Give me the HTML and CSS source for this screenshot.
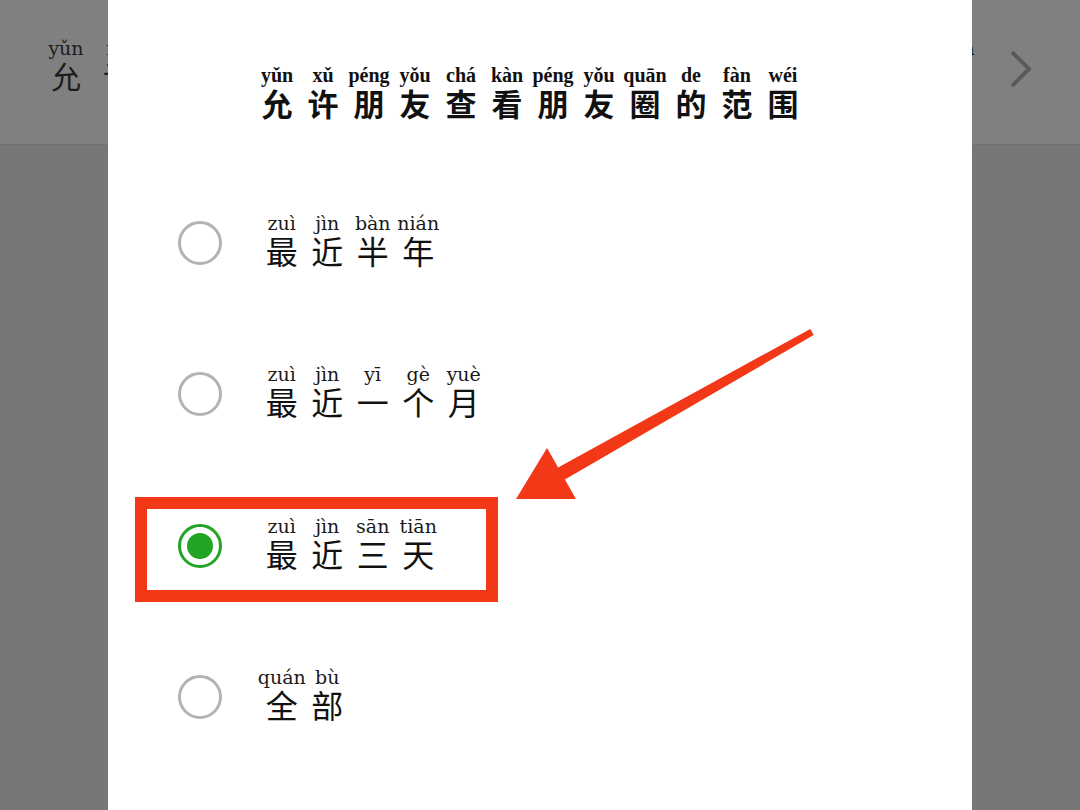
FILE: index.html
```html
<!DOCTYPE html>
<html lang="zh-CN">
<head>
<meta charset="utf-8">
<title>允许朋友查看朋友圈的范围</title>
<link rel="stylesheet" href="styles.css">
</head>
<body>
<div class="screen">
  <header class="topbar">
    <div class="word bg-word">
      <div class="col bcol"><span class="py">yǔn</span><span class="hz">允</span></div>
      <div class="col bcol"><span class="py">xǔ</span><span class="hz">许</span></div>
      <div class="col bcol"><span class="py">péng</span><span class="hz">朋</span></div>
      <div class="col bcol"><span class="py">yǒu</span><span class="hz">友</span></div>
    </div>
    <div class="right">
      <div class="word bg-word">
        <div class="col bcol"><span class="py">zuì</span><span class="hz">最</span></div>
        <div class="col bcol"><span class="py">jìn</span><span class="hz">近</span></div>
        <div class="col bcol"><span class="py">sān</span><span class="hz">三</span></div>
        <div class="col bcol"><span class="py">tiān</span><span class="hz">天</span></div>
      </div>
      <svg class="chev" width="24" height="38" viewBox="0 0 24 38"><path d="M4 2 L21 19 L4 36" fill="none" stroke="#5a5a5a" stroke-width="4"/></svg>
    </div>
  </header>
  <div class="rest"></div>

  <div class="dialog">
    <div class="title">
      <div class="word">
        <div class="col tcol"><span class="py">yǔn</span><span class="hz">允</span></div>
        <div class="col tcol"><span class="py">xǔ</span><span class="hz">许</span></div>
        <div class="col tcol"><span class="py">péng</span><span class="hz">朋</span></div>
        <div class="col tcol"><span class="py">yǒu</span><span class="hz">友</span></div>
        <div class="col tcol"><span class="py">chá</span><span class="hz">查</span></div>
        <div class="col tcol"><span class="py">kàn</span><span class="hz">看</span></div>
        <div class="col tcol"><span class="py">péng</span><span class="hz">朋</span></div>
        <div class="col tcol"><span class="py">yǒu</span><span class="hz">友</span></div>
        <div class="col tcol"><span class="py">quān</span><span class="hz">圈</span></div>
        <div class="col tcol"><span class="py">de</span><span class="hz">的</span></div>
        <div class="col tcol"><span class="py">fàn</span><span class="hz">范</span></div>
        <div class="col tcol"><span class="py">wéi</span><span class="hz">围</span></div>
      </div>
    </div>

    <div class="options">
      <div class="option">
        <span class="radio"></span>
        <div class="word">
          <div class="col ocol"><span class="py">zuì</span><span class="hz">最</span></div>
          <div class="col ocol"><span class="py">jìn</span><span class="hz">近</span></div>
          <div class="col ocol"><span class="py">bàn</span><span class="hz">半</span></div>
          <div class="col ocol"><span class="py">nián</span><span class="hz">年</span></div>
        </div>
      </div>
      <div class="option">
        <span class="radio"></span>
        <div class="word">
          <div class="col ocol"><span class="py">zuì</span><span class="hz">最</span></div>
          <div class="col ocol"><span class="py">jìn</span><span class="hz">近</span></div>
          <div class="col ocol"><span class="py">yī</span><span class="hz">一</span></div>
          <div class="col ocol"><span class="py">gè</span><span class="hz">个</span></div>
          <div class="col ocol"><span class="py">yuè</span><span class="hz">月</span></div>
        </div>
      </div>
      <div class="option">
        <span class="radio checked"></span>
        <div class="word">
          <div class="col ocol"><span class="py">zuì</span><span class="hz">最</span></div>
          <div class="col ocol"><span class="py">jìn</span><span class="hz">近</span></div>
          <div class="col ocol"><span class="py">sān</span><span class="hz">三</span></div>
          <div class="col ocol"><span class="py">tiān</span><span class="hz">天</span></div>
        </div>
      </div>
      <div class="option">
        <span class="radio"></span>
        <div class="word">
          <div class="col ocol"><span class="py">quán</span><span class="hz">全</span></div>
          <div class="col ocol"><span class="py">bù</span><span class="hz">部</span></div>
        </div>
      </div>
    </div>
  </div>

  <svg class="annot" width="1080" height="810" viewBox="0 0 1080 810">
    <rect x="141" y="503" width="351" height="93" fill="none" stroke="#f23816" stroke-width="12"/>
    <polygon points="810.3,328.9 558.1,467.4 547,448 516,499 576,499 564.9,479.6 813.7,335" fill="#f23816"/>
  </svg>
</div>
</body>
</html>
```

FILE: styles.css
```css
* { box-sizing: border-box; }
html, body { margin: 0; padding: 0; }
body {
  width: 1080px;
  height: 810px;
  overflow: hidden;
  background: #777777;
  font-family: "Noto Sans CJK SC", "Noto Sans", sans-serif;
}
.screen {
  position: relative;
  width: 1080px;
  height: 810px;
  display: flex;
  flex-direction: column;
}
.topbar {
  height: 145px;
  background: #808080;
  border-bottom: 1px solid #717171;
  display: flex;
  justify-content: space-between;
  align-items: flex-start;
  padding: 38px 48px 0 40px;
}
.rest { flex: 1; background: #777777; }
.right {
  display: flex;
  align-items: center;
  gap: 26px;
}
.chev { margin-top: 8px; }

.word { display: flex; }
.col {
  display: flex;
  flex-direction: column;
  align-items: center;
}
.py { white-space: nowrap; }
.hz { white-space: nowrap; }

.bcol { width: 52px; }
.bcol .py {
  font-family: "DejaVu Serif", "Liberation Serif", serif;
  font-size: 19px;
  line-height: 20px;
  color: #1c1c1c;
}
.bcol .hz {
  font-family: "Noto Sans CJK SC", sans-serif;
  font-size: 30px;
  line-height: 34px;
  color: #1c1c1c;
}

.dialog {
  position: absolute;
  left: 108px;
  top: 0;
  width: 864px;
  height: 810px;
  background: #ffffff;
  padding-top: 65px;
}
.title {
  display: flex;
  justify-content: center;
  padding-right: 20px;
}
.tcol { width: 46px; }
.tcol .py {
  font-family: "Liberation Serif", serif;
  font-weight: 700;
  font-size: 20px;
  line-height: 20px;
  color: #111;
}
.tcol .hz {
  font-family: "Noto Sans CJK SC", sans-serif;
  font-weight: 700;
  font-size: 31px;
  line-height: 36px;
  color: #111;
}

.options {
  margin-top: 46.5px;
  padding-left: 70px;
}
.option {
  height: 151.3px;
  display: flex;
  align-items: center;
  gap: 37px;
}
.ocol { width: 45.5px; }
.ocol .py {
  font-family: "DejaVu Serif", "Liberation Serif", serif;
  font-size: 19px;
  line-height: 19px;
  color: #1a1a1a;
}
.ocol .hz {
  font-family: "Noto Sans CJK SC", sans-serif;
  font-size: 32px;
  line-height: 34px;
  color: #111;
}
.option .word { margin-top: -5px; }

.radio {
  width: 44px;
  height: 44px;
  border-radius: 50%;
  border: 3px solid #b3b3b3;
  flex: none;
  display: flex;
  align-items: center;
  justify-content: center;
}
.radio.checked { border-color: #22a524; }
.radio.checked::after {
  content: "";
  width: 26px;
  height: 26px;
  border-radius: 50%;
  background: #22a524;
}

.annot {
  position: absolute;
  left: 0;
  top: 0;
  pointer-events: none;
}
```
